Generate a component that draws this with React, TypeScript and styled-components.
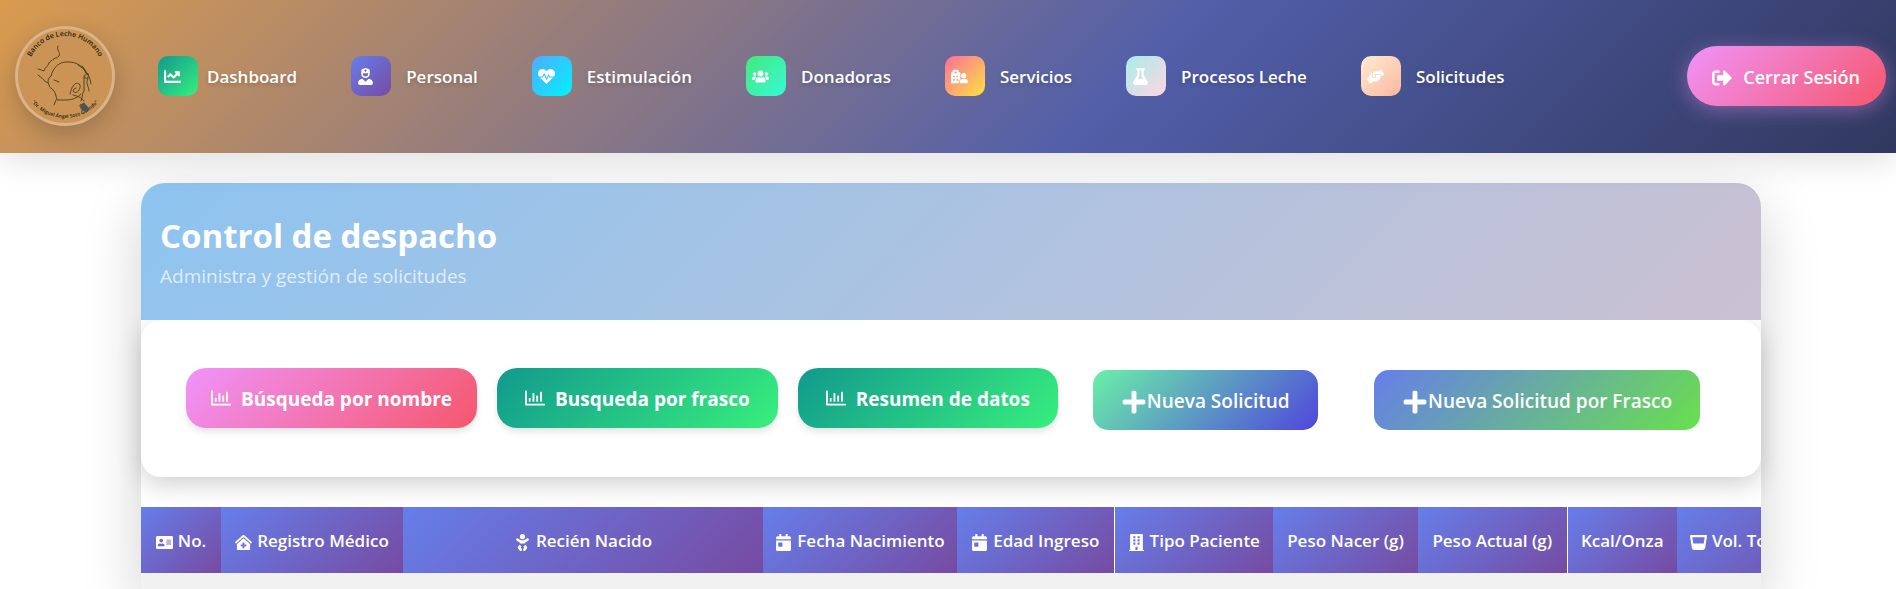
import React from "react";
import styled, { createGlobalStyle } from "styled-components";
import {
  FaAddressCard,
  FaBaby,
  FaBuilding,
  FaCalendarDay,
  FaChartLine,
  FaClinicMedical,
  FaFlask,
  FaGlassWhiskey,
  FaHandsHelping,
  FaHeartbeat,
  FaHospitalUser,
  FaPlus,
  FaRegChartBar,
  FaSignOutAlt,
  FaUserNurse,
  FaUsers,
} from "react-icons/fa";
import type { IconType } from "react-icons";

const GlobalStyle = createGlobalStyle`
  * { box-sizing: border-box; }
  body {
    margin: 0;
    background: #ffffff;
    font-family: "Segoe UI", "Open Sans", "Noto Sans", sans-serif;
  }
`;

const Page = styled.div`
  display: flex;
  flex-direction: column;
  min-height: 100vh;
  overflow: hidden;
`;

const TopBar = styled.header`
  position: relative;
  z-index: 2;
  display: flex;
  align-items: center;
  padding: 26px 10px 27px 15px;
  background: linear-gradient(135deg, #da9b4e 0%, #525fa9 59%, #31385f 100%);
  box-shadow: 0 8px 32px rgba(0, 0, 0, 0.12);
`;

const Logo = styled.a`
  display: block;
  width: 100px;
  height: 100px;
  border: 3px solid rgba(255, 255, 255, 0.3);
  border-radius: 50%;
  box-shadow: 0 8px 25px rgba(0, 0, 0, 0.2);
  background: #cb9356;

  svg {
    display: block;
    width: 100%;
    height: 100%;
  }
`;

const Nav = styled.nav`
  display: flex;
  flex: 1;
  gap: 54px;
  margin-left: 43px;
`;

const NavLink = styled.a<{ $tight?: boolean }>`
  display: flex;
  align-items: center;
  gap: ${({ $tight }) => ($tight ? "9px" : "15px")};
  color: #ffffff;
  font-size: 17px;
  font-weight: 600;
  line-height: 24px;
  white-space: nowrap;
  text-decoration: none;
  text-shadow: 0 2px 4px rgba(0, 0, 0, 0.2);
`;

const NavLabel = styled.span`
  padding-top: 2px;
`;

const NavIcon = styled.span<{ $from: string; $to: string }>`
  display: flex;
  align-items: center;
  width: 40px;
  height: 40px;
  padding-left: 6px;
  border-radius: 10px;
  background: linear-gradient(135deg, ${({ $from }) => $from}, ${({ $to }) => $to});
  font-size: 17px;
`;

const LogoutButton = styled.button`
  display: flex;
  align-items: center;
  gap: 11px;
  height: 60px;
  padding: 2px 26px 0 25px;
  border: 0;
  border-radius: 30px;
  background: linear-gradient(135deg, #f093fb, #f5576c);
  box-shadow: 0 4px 20px rgba(240, 147, 251, 0.4);
  color: #ffffff;
  font: 600 18px/24px "Segoe UI", "Open Sans", "Noto Sans", sans-serif;
  white-space: nowrap;

  svg {
    margin-top: 2px;
    font-size: 20px;
  }
`;

const Main = styled.main`
  display: flex;
  flex: 1;
  flex-direction: column;
  margin: 30px 135px 0 141px;
  border-radius: 24px 24px 0 0;
  background: #ffffff;
  box-shadow: 0 20px 60px rgba(0, 0, 0, 0.18);
`;

const Heading = styled.div`
  position: relative;
  z-index: 1;
  padding: 29px 19px 28px;
  border-radius: 24px 24px 0 0;
  background: linear-gradient(135deg, #8dc4f0, #cbc1d2);
  color: #ffffff;
`;

const Title = styled.h1`
  margin: 0;
  font-size: 33px;
  font-weight: 700;
  line-height: 48px;
`;

const Subtitle = styled.p`
  margin: 0;
  font-size: 19px;
  line-height: 32px;
  opacity: 0.7;
`;

const Actions = styled.div`
  display: flex;
  align-items: flex-start;
  gap: 20px;
  padding: 48px 61px 47px 45px;
  border-radius: 20px;
  background: #ffffff;
  box-shadow: 0 8px 25px rgba(0, 0, 0, 0.18);
`;

const ActionButton = styled.button<{ $from: string; $to: string; $wide?: boolean }>`
  display: flex;
  align-items: center;
  justify-content: center;
  gap: 10px;
  height: 60px;
  padding: 2px ${({ $wide }) => ($wide ? "28px" : "25px")} 0;
  border: 0;
  border-radius: 20px;
  background: linear-gradient(135deg, ${({ $from }) => $from}, ${({ $to }) => $to});
  box-shadow: 0 4px 6px rgba(0, 0, 0, 0.1);
  color: #ffffff;
  font: 700 19px/24px "Segoe UI", "Open Sans", "Noto Sans", sans-serif;
  white-space: nowrap;

  svg {
    margin-bottom: 2px;
    font-size: 20px;
  }
`;

const CreateGroup = styled.div`
  display: flex;
  flex: 1;
  justify-content: space-between;
  margin: 2px 0 0 15px;
`;

const CreateButton = styled(ActionButton)`
  gap: 0;
  padding: 2px 28px 0;
  border-radius: 15px;
  box-shadow: none;
  font-weight: 600;

  svg {
    margin: 2px 0 0;
    font-size: 26px;
  }
`;

const TableArea = styled.div`
  flex: 1;
  margin-top: 30px;
  overflow: hidden;
  background: linear-gradient(#ffffff 66px, #f1f1f1 66px);
`;

const Table = styled.table`
  width: 1696px;
  table-layout: fixed;
  border-collapse: collapse;
`;

const HeadCell = styled.th<{ $width: number; $divider?: boolean }>`
  width: ${({ $width }) => $width}px;
  height: 66px;
  padding: 2px 0 0;
  border-right: ${({ $divider }) => ($divider ? "1px solid #ffffff" : "0")};
  background: linear-gradient(135deg, #667eea, #764ba2);
  background-clip: padding-box;
  color: #ffffff;
  font-size: 17px;
  font-weight: 600;
  line-height: 24px;
  white-space: nowrap;
`;

const HeadLabel = styled.span`
  display: flex;
  align-items: center;
  justify-content: center;
  gap: 5px;

  svg {
    margin-top: 2px;
    font-size: 17px;
  }
`;

interface NavItem {
  label: string;
  icon: IconType;
  from: string;
  to: string;
}

const navItems: NavItem[] = [
  { label: "Dashboard", icon: FaChartLine, from: "#11998e", to: "#38ef7d" },
  { label: "Personal", icon: FaUserNurse, from: "#667eea", to: "#764ba2" },
  { label: "Estimulación", icon: FaHeartbeat, from: "#4facfe", to: "#00f2fe" },
  { label: "Donadoras", icon: FaUsers, from: "#43e97b", to: "#38f9d7" },
  { label: "Servicios", icon: FaHospitalUser, from: "#fa709a", to: "#fee140" },
  { label: "Procesos Leche", icon: FaFlask, from: "#a8edea", to: "#fed6e3" },
  { label: "Solicitudes", icon: FaHandsHelping, from: "#ffecd2", to: "#fcb69f" },
];

const searches = [
  { label: "Búsqueda por nombre", from: "#f093fb", to: "#f5576c" },
  { label: "Busqueda por frasco", from: "#11998e", to: "#38ef7d", wide: true },
  { label: "Resumen de datos", from: "#11998e", to: "#38ef7d", wide: true },
];

const creations = [
  { label: "Nueva Solicitud", from: "#6af0a8", to: "#4f46dc" },
  { label: "Nueva Solicitud por Frasco", from: "#667eea", to: "#69e04e" },
];

interface Column {
  label: string;
  width: number;
  icon?: IconType;
  divider?: boolean;
}

const columns: Column[] = [
  { label: "No.", width: 80, icon: FaAddressCard },
  { label: "Registro Médico", width: 182, icon: FaClinicMedical },
  { label: "Recién Nacido", width: 360, icon: FaBaby },
  { label: "Fecha Nacimiento", width: 194, icon: FaCalendarDay },
  { label: "Edad Ingreso", width: 157, icon: FaCalendarDay, divider: true },
  { label: "Tipo Paciente", width: 159, icon: FaBuilding },
  { label: "Peso Nacer (g)", width: 145 },
  { label: "Peso Actual (g)", width: 149, divider: true },
  { label: "Kcal/Onza", width: 110 },
  { label: "Vol. Total (ml)", width: 160, icon: FaGlassWhiskey },
];

function LogoDrawing() {
  return (
    <svg viewBox="0 0 94 94" fill="none" stroke="#3f3f18" strokeWidth="0.9" strokeLinecap="round">
      <defs>
        <path id="upper-arc" d="M9 45a38 38 0 0 1 76 0" />
        <path id="lower-arc" d="M4 46a43 43 0 0 0 86 0" />
      </defs>
      <g fill="#24260f" stroke="none" fontFamily="Open Sans, sans-serif" fontWeight="600" textAnchor="middle">
        <text fontSize="7">
          <textPath href="#upper-arc" startOffset="50%">Banco de Leche Humano</textPath>
        </text>
        <text fontSize="5">
          <textPath href="#lower-arc" startOffset="50%">"Dr. Miguel Ángel Soto Galindo"</textPath>
        </text>
      </g>
      <path d="M40 17c-2 4 3 7 1 10c-2 3-5 1-6 4M34 31l-3 3M31 34c-1 4-4 4-5 8c-3-1-5-2-6-2" />
      <path d="M20 46c4 2 6 7 10 8M33 47c2-9 9-15 18-14c8 0 15 5 17 11M33 47c-4 3-3 6-2 9c0 3 3 3 4 5c3 3 3 7 4 10c11 0 17 1 24-6" />
      <path d="M36 51l5 2M38 71l-2 5M60 36c7 4 12 10 13 19M64 37c3 3 4 6 5 8M66 47v15c-2 2-1 5-3 10M70 45c-3-1-4 2-3 4c2 1 4 0 3-4M70 49c-3 6 1 8 1 13" />
      <path d="M52 65c2-10 7-13 10-9c1 4-3 9-6 7c-2-1 0-4 2-4M55 66c4 1 8 2 11 6" />
      <path d="M62 76l4-2l5 6l-2 3l-5-2z" fill="#4d5356" stroke="#4d5356" />
    </svg>
  );
}

export default function App() {
  return (
    <Page>
      <GlobalStyle />
      <TopBar>
        <Logo href="#inicio" aria-label="Inicio">
          <LogoDrawing />
        </Logo>
        <Nav>
          {navItems.map(({ label, icon: Icon, from, to }, index) => (
            <NavLink key={label} href="#" $tight={index === 0}>
              <NavIcon $from={from} $to={to}>
                <Icon />
              </NavIcon>
              <NavLabel>{label}</NavLabel>
            </NavLink>
          ))}
        </Nav>
        <LogoutButton type="button">
          <FaSignOutAlt />
          Cerrar Sesión
        </LogoutButton>
      </TopBar>
      <Main>
        <Heading>
          <Title>Control de despacho</Title>
          <Subtitle>Administra y gestión de solicitudes</Subtitle>
        </Heading>
        <Actions>
          {searches.map(({ label, from, to, wide }) => (
            <ActionButton key={label} type="button" $from={from} $to={to} $wide={wide}>
              <FaRegChartBar />
              {label}
            </ActionButton>
          ))}
          <CreateGroup>
            {creations.map(({ label, from, to }) => (
              <CreateButton key={label} type="button" $from={from} $to={to}>
                <FaPlus />
                {label}
              </CreateButton>
            ))}
          </CreateGroup>
        </Actions>
        <TableArea>
          <Table>
            <thead>
              <tr>
                {columns.map(({ label, width, icon: Icon, divider }) => (
                  <HeadCell key={label} scope="col" $width={width} $divider={divider}>
                    <HeadLabel>
                      {Icon && <Icon />}
                      {label}
                    </HeadLabel>
                  </HeadCell>
                ))}
              </tr>
            </thead>
          </Table>
        </TableArea>
      </Main>
    </Page>
  );
}
